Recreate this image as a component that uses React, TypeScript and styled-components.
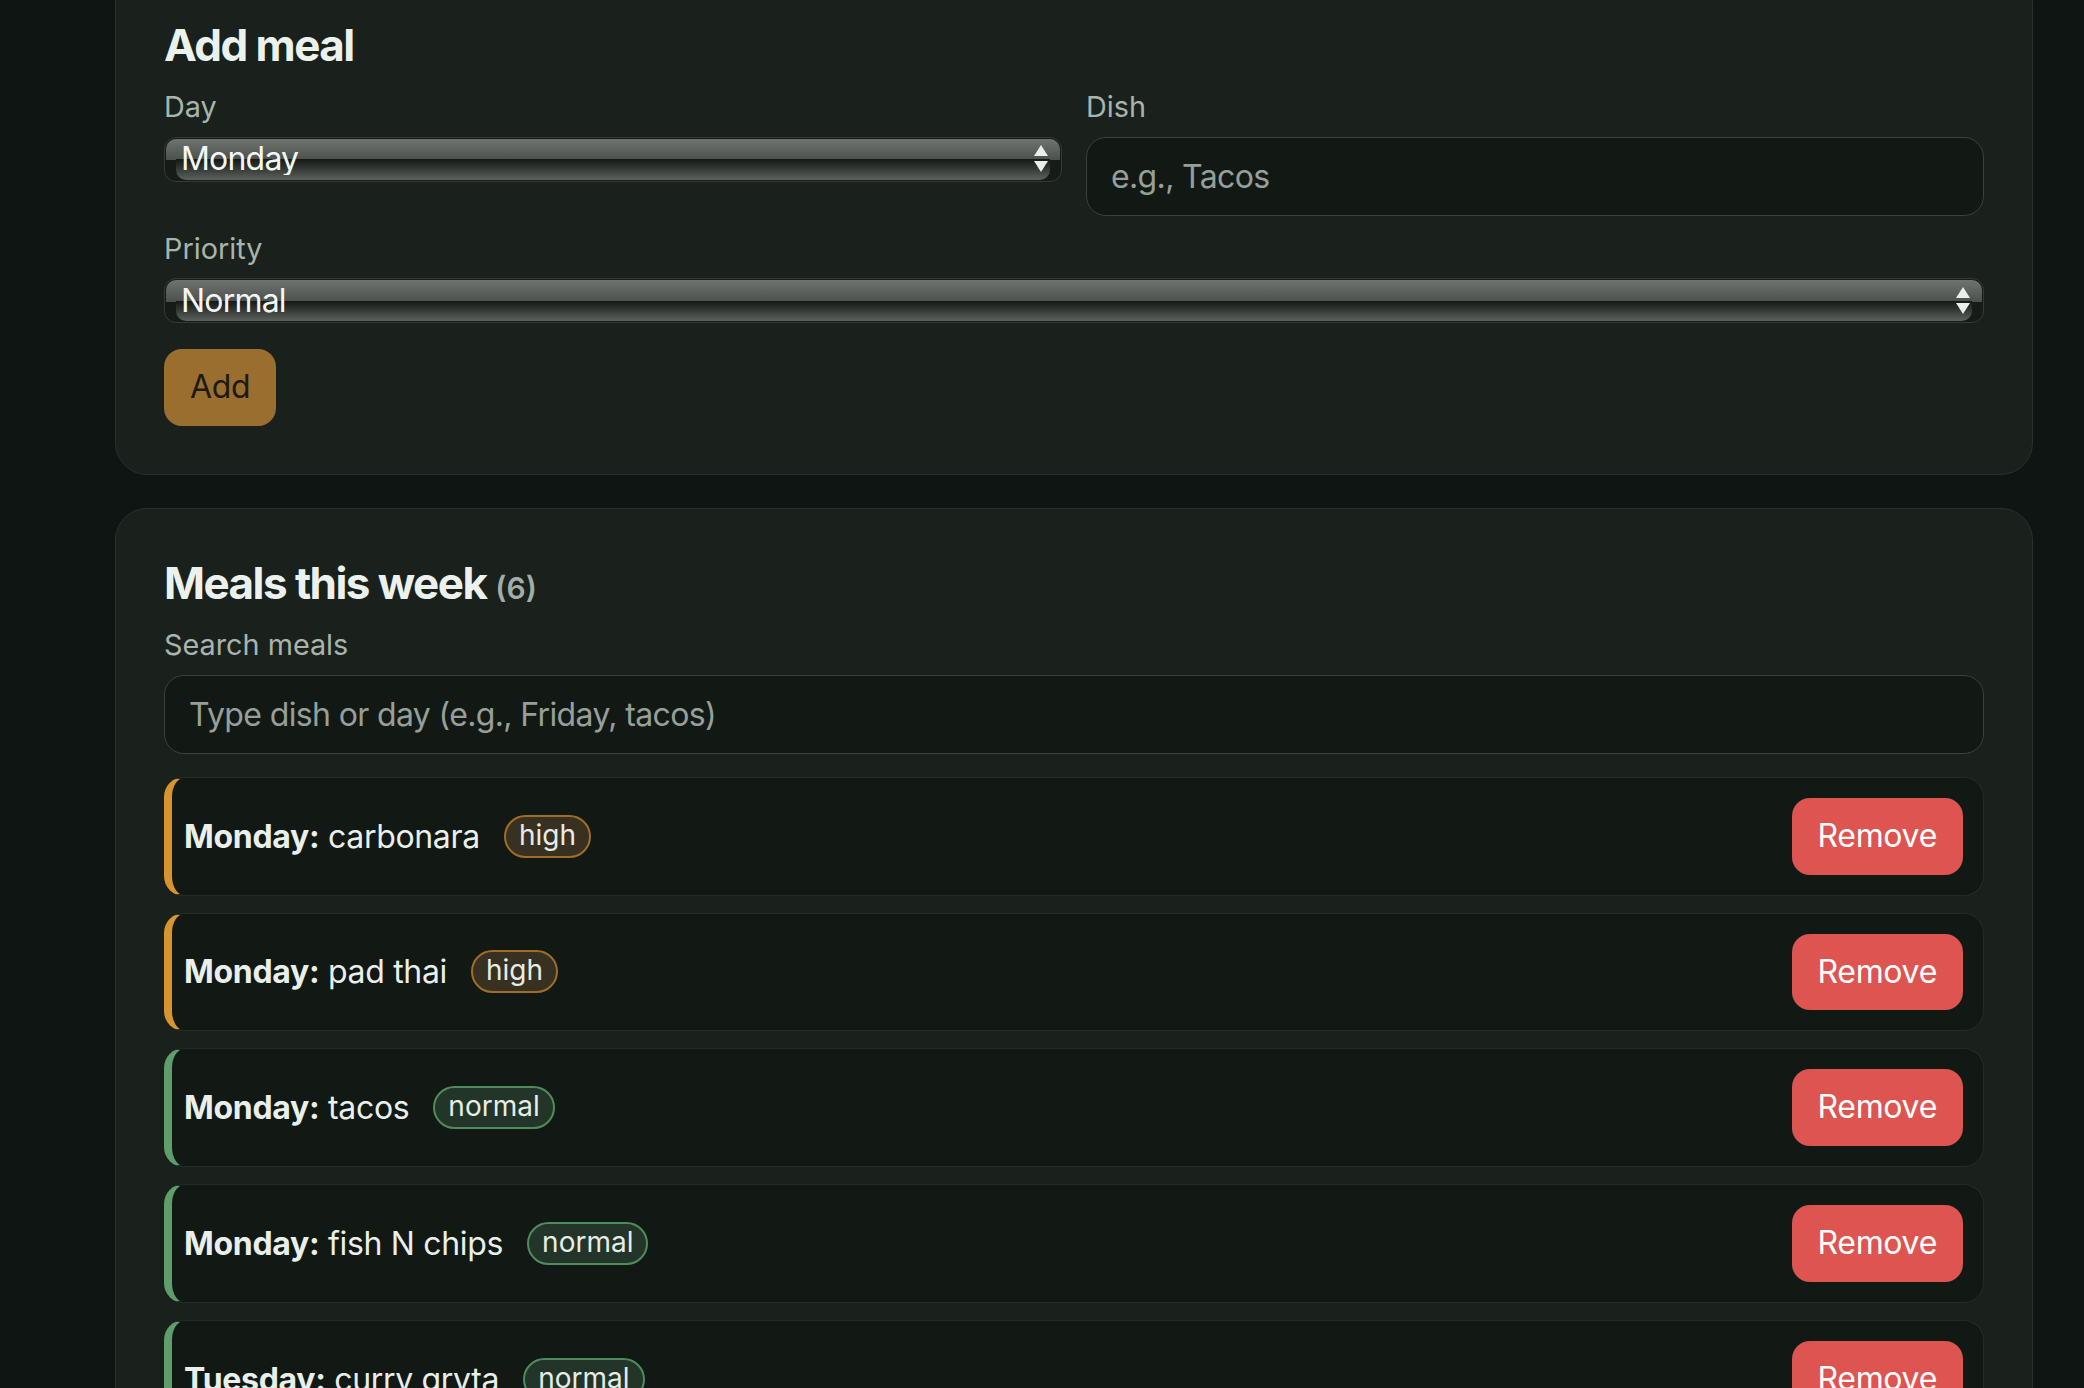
import styled, { createGlobalStyle } from "styled-components";

type Priority = "high" | "normal";

interface Meal {
  day: string;
  dish: string;
  priority: Priority;
}

const meals: Meal[] = [
  { day: "Monday", dish: "carbonara", priority: "high" },
  { day: "Monday", dish: "pad thai", priority: "high" },
  { day: "Monday", dish: "tacos", priority: "normal" },
  { day: "Monday", dish: "fish N chips", priority: "normal" },
  { day: "Tuesday", dish: "curry gryta", priority: "normal" },
  { day: "Wednesday", dish: "lasagna", priority: "normal" },
];

const days = ["Monday", "Tuesday", "Wednesday", "Thursday", "Friday", "Saturday", "Sunday"];

const GlobalStyle = createGlobalStyle`
  * { box-sizing: border-box; }
  html, body {
    margin: 0;
    background: #0f1512;
  }
  body {
    font-family: Inter, "Noto Sans", "Liberation Sans", sans-serif;
    color: #e9efea;
    letter-spacing: -0.02em;
  }
`;

const Page = styled.main`
  display: flex;
  flex-direction: column;
  gap: 33px;
  /* page is scrolled a little: the first card's top edge sits above the fold */
  margin-top: -30px;
  padding: 0 51px 40px 115px;
`;

const Card = styled.section`
  background: #1a211d;
  border: 1px solid #29312c;
  border-radius: 32px;
  padding: 48px;
`;

const Heading = styled.h2`
  margin: 0 0 18px;
  font-size: 44px;
  line-height: 1.2;
  font-weight: 700;
  letter-spacing: -0.035em;
  color: #ebf1ec;
`;

const Count = styled.span`
  font-size: 30px;
  font-weight: 600;
  letter-spacing: 0;
  color: #a1ada6;
`;

const FormGrid = styled.div`
  display: grid;
  grid-template-columns: 1fr 1fr;
  gap: 16px 24px;
  align-items: start;
`;

const Field = styled.label<{ $wide?: boolean }>`
  display: flex;
  flex-direction: column;
  gap: 12px;
  grid-column: ${(p) => (p.$wide ? "1 / -1" : "auto")};
`;

const LabelText = styled.span`
  font-size: 28.8px;
  line-height: 1.21;
  letter-spacing: 0;
  color: #a8b4ac;
`;

const SelectShell = styled.div`
  position: relative;
  isolation: isolate;
  height: 45px;
  border: 1px solid #343b37;
  border-radius: 12px;
  background: #161b18;

  &::before,
  &::after {
    content: "";
    position: absolute;
    z-index: -1;
  }

  /* glossy top half, full width */
  &::before {
    left: 1px;
    right: 1px;
    top: 1px;
    height: 50%;
    border-radius: 10px 10px 0 0;
    background: linear-gradient(#6f7470, #4b504c);
  }

  /* lower half, tucked in from both ends */
  &::after {
    left: 11px;
    right: 11px;
    bottom: 1px;
    top: 50%;
    border-radius: 0 0 10px 10px;
    background: linear-gradient(#141916 0%, #2c312e 35%, #5d625e 100%);
  }
`;

const NativeSelect = styled.select`
  appearance: none;
  width: 100%;
  height: 100%;
  border: none;
  background: transparent;
  font-family: inherit;
  font-size: 32px;
  letter-spacing: -0.025em;
  line-height: 1;
  color: #f3f6f3;
  padding: 0 44px 0 16px;
  outline: none;
`;

const Arrows = styled.svg`
  position: absolute;
  right: 13px;
  top: 50%;
  transform: translateY(-50%);
  pointer-events: none;
`;

const TextInput = styled.input`
  width: 100%;
  height: 79px;
  font-family: inherit;
  font-size: 32px;
  letter-spacing: -0.02em;
  padding: 0 24px;
  background: #121915;
  color: #e9efea;
  border: 1px solid #39423c;
  border-radius: 20px;
  outline: none;

  &::placeholder {
    color: #979f9a;
  }
`;

const Button = styled.button<{ $tone: "add" | "danger" }>`
  font-family: inherit;
  font-size: 32px;
  line-height: 1.21;
  letter-spacing: -0.01em;
  padding: 19px 26px;
  border: none;
  border-radius: 18px;
  cursor: pointer;
  background: ${(p) => (p.$tone === "add" ? "#9a6e2f" : "#de5450")};
  color: ${(p) => (p.$tone === "add" ? "#1d1a10" : "#ffffff")};
`;

const AddButton = styled(Button)`
  justify-self: start;
  margin-top: 10px;
`;

const SearchField = styled(Field)`
  margin-bottom: 23px;
`;

const MealList = styled.ul`
  list-style: none;
  margin: 0;
  padding: 0;
  display: flex;
  flex-direction: column;
  gap: 17px;
`;

const MealRow = styled.li<{ $priority: Priority }>`
  display: flex;
  align-items: center;
  justify-content: space-between;
  padding: 20px 20px 20px 12px;
  background: #121814;
  border: 1px solid #242c27;
  border-left: 8px solid ${(p) => (p.$priority === "high" ? "#d8952f" : "#5f9d6d")};
  border-radius: 20px;
`;

const MealInfo = styled.div`
  display: flex;
  align-items: center;
  gap: 24px;
`;

const MealText = styled.span`
  font-size: 32px;
  color: #e9efea;

  strong {
    font-weight: 700;
  }
`;

const Badge = styled.span<{ $priority: Priority }>`
  font-size: 28px;
  line-height: 1.21;
  letter-spacing: 0;
  padding: 2px 13px 3px;
  border-radius: 999px;
  color: #e6ece7;
  border: 2px solid ${(p) => (p.$priority === "high" ? "#a06d27" : "#4f8b5d")};
  background: ${(p) => (p.$priority === "high" ? "#383020" : "#233428")};
`;

function Select({ value, options }: { value: string; options: string[] }) {
  return (
    <SelectShell>
      <NativeSelect defaultValue={value}>
        {options.map((o) => (
          <option key={o}>{o}</option>
        ))}
      </NativeSelect>
      <Arrows width="14" height="28" viewBox="0 0 14 28">
        <polygon points="7,0 14,11 0,11" fill="#e9eee9" />
        <polygon points="0,16 14,16 7,27" fill="#e9eee9" />
      </Arrows>
    </SelectShell>
  );
}

export default function App() {
  return (
    <>
      <GlobalStyle />
      <Page>
        <Card>
          <Heading>Add meal</Heading>
          <FormGrid>
            <Field>
              <LabelText>Day</LabelText>
              <Select value="Monday" options={days} />
            </Field>
            <Field>
              <LabelText>Dish</LabelText>
              <TextInput placeholder="e.g., Tacos" />
            </Field>
            <Field $wide>
              <LabelText>Priority</LabelText>
              <Select value="Normal" options={["Normal", "High"]} />
            </Field>
            <AddButton $tone="add">Add</AddButton>
          </FormGrid>
        </Card>

        <Card>
          <Heading>
            Meals this week <Count>({meals.length})</Count>
          </Heading>
          <SearchField>
            <LabelText>Search meals</LabelText>
            <TextInput placeholder="Type dish or day (e.g., Friday, tacos)" />
          </SearchField>
          <MealList>
            {meals.map((m) => (
              <MealRow key={m.day + m.dish} $priority={m.priority}>
                <MealInfo>
                  <MealText>
                    <strong>{m.day}:</strong> {m.dish}
                  </MealText>
                  <Badge $priority={m.priority}>{m.priority}</Badge>
                </MealInfo>
                <Button $tone="danger">Remove</Button>
              </MealRow>
            ))}
          </MealList>
        </Card>
      </Page>
    </>
  );
}
